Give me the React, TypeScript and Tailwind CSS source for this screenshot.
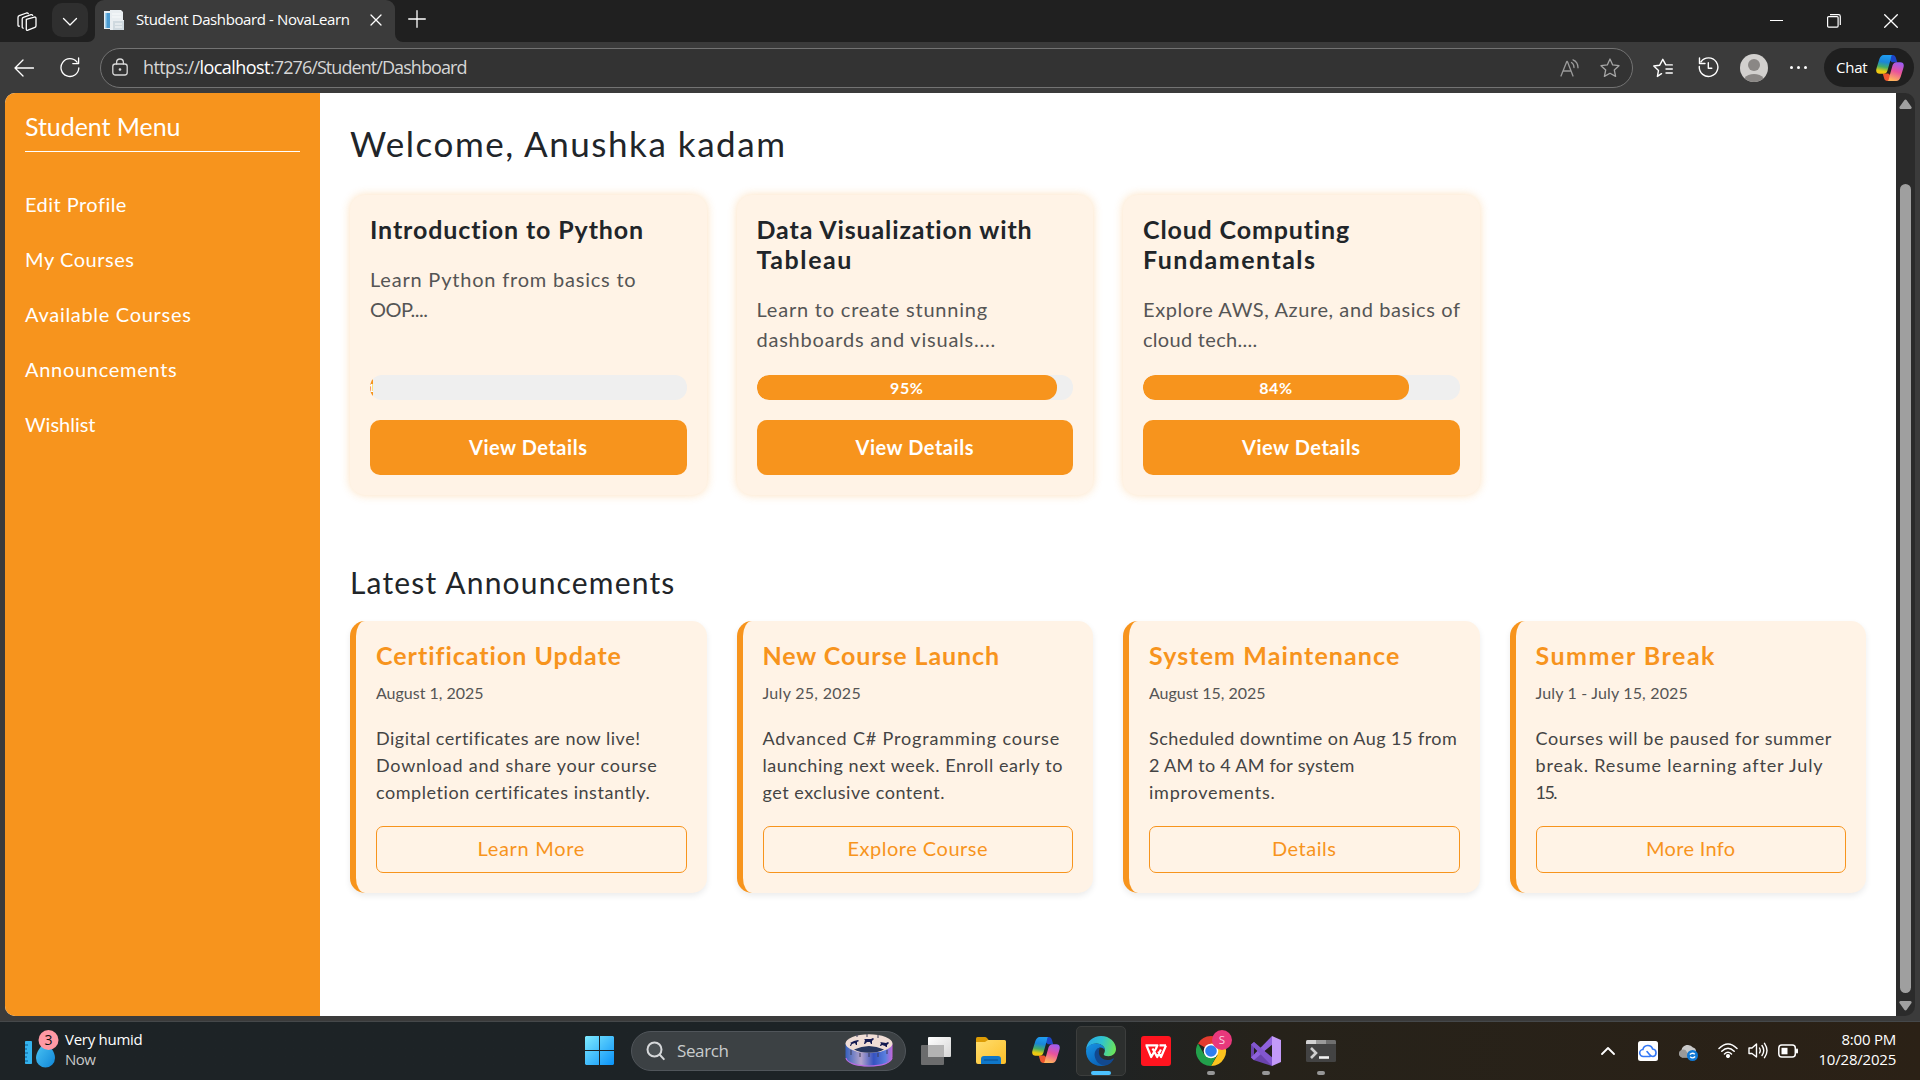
import React, { useLayoutEffect, useRef } from "react";

/* A single line of text whose letter spacing is adjusted to a given measure. */
function Line({ w, className = "", children }: { w: number; className?: string; children: string }) {
  const ref = useRef<HTMLSpanElement>(null);
  useLayoutEffect(() => {
    const el = ref.current;
    if (!el) return;
    el.style.letterSpacing = "0px";
    const natural = el.getBoundingClientRect().width;
    el.style.letterSpacing = `${(w + 1.5 - natural) / children.length}px`;
  }, [w, children]);
  return (
    <span className={`block ${className}`}>
      <span ref={ref} className="inline-block whitespace-nowrap">
        {children}
      </span>
    </span>
  );
}

type T = [string, number];

const menu: T[] = [
  ["Edit Profile", 100],
  ["My Courses", 108],
  ["Available Courses", 165],
  ["Announcements", 151],
  ["Wishlist", 69],
];

const courses: { title: T[]; desc: T[]; pct: number; label?: string }[] = [
  { title: [["Introduction to Python", 273]], desc: [["Learn Python from basics to", 265], ["OOP....", 56]], pct: 1 },
  {
    title: [["Data Visualization with", 275], ["Tableau", 95]],
    desc: [["Learn to create stunning", 230], ["dashboards and visuals....", 238]],
    pct: 95,
    label: "95%",
  },
  {
    title: [["Cloud Computing", 206], ["Fundamentals", 172]],
    desc: [["Explore AWS, Azure, and basics of", 316], ["cloud tech....", 113]],
    pct: 84,
    label: "84%",
  },
];

const news: { title: T; date: T; body: T[]; action: T }[] = [
  {
    title: ["Certification Update", 245],
    date: ["August 1, 2025", 106],
    body: [["Digital certificates are now live!", 263], ["Download and share your course", 280], ["completion certificates instantly.", 273]],
    action: ["Learn More", 106],
  },
  {
    title: ["New Course Launch", 236],
    date: ["July 25, 2025", 97],
    body: [["Advanced C# Programming course", 296], ["launching next week. Enroll early to", 299], ["get exclusive content.", 181]],
    action: ["Explore Course", 139],
  },
  {
    title: ["System Maintenance", 250],
    date: ["August 15, 2025", 115],
    body: [["Scheduled downtime on Aug 15 from", 307], ["2 AM to 4 AM for system", 204], ["improvements.", 125]],
    action: ["Details", 63],
  },
  {
    title: ["Summer Break", 179],
    date: ["July 1 - July 15, 2025", 151],
    body: [["Courses will be paused for summer", 295], ["break. Resume learning after July", 286], ["15.", 19]],
    action: ["More Info", 88],
  },
];

function Copilot({ id, className }: { id: string; className: string }) {
  return (
    <svg viewBox="0 0 28 26" className={className}>
      <defs>
        <linearGradient id={`${id}a`} x1="0.4" y1="0" x2="0.25" y2="1">
          <stop offset="0" stopColor="#1f9cf0" />
          <stop offset="0.35" stopColor="#1a86d8" />
          <stop offset="0.62" stopColor="#45ad66" />
          <stop offset="0.85" stopColor="#e8cc12" />
          <stop offset="1" stopColor="#f6c212" />
        </linearGradient>
        <linearGradient id={`${id}b`} x1="0.7" y1="0" x2="0.4" y2="1">
          <stop offset="0" stopColor="#9a5cf5" />
          <stop offset="0.5" stopColor="#e9529c" />
          <stop offset="1" stopColor="#ffb45c" />
        </linearGradient>
      </defs>
      <path d="M14 0h2.600c1.700 0 2.800 1.100 3.300 2.800l1.300 4.400h-5.400L13.500 5z" fill="#1b46c8" />
      <path d="M14 26h-2.600c-1.800 0-2.800-1.100-3.300-2.800L6.700 18.500h5.500l2.500 2z" fill="#ee5630" />
      <path d="M16.200 0H7.800C5.600 0 4.200 1.600 3.300 4.300L.7 12.800C-.7 17 .9 18.700 3.600 18.700h4c2 0 3.200-1.200 3.900-3.300l3.100-11c.5-2 .6-4 1.600-4.400z" fill={`url(#${id}a)`} />
      <path d="M11.800 26h8.400c2.200 0 3.600-1.600 4.500-4.300l2.600-8.500c1.300-4.200-.2-6-2.900-6h-4c-2 0-3.200 1.300-3.900 3.400l-3.100 11c-.5 2-.6 4-1.600 4.400z" fill={`url(#${id}b)`} />
    </svg>
  );
}

const thin = { fill: "none", stroke: "#fff", strokeWidth: 1.3, strokeLinecap: "round", strokeLinejoin: "round" } as const;

function TabStrip() {
  return (
    <div className="flex h-[42px] shrink-0 items-center bg-[#202020]">
      <svg viewBox="0 0 20 20" className="ml-[17px] mt-[2px] h-5 w-5" {...thin}>
        <path d="M9.300 7.300l8-2.200q1.700-.4 1.700 1.300v7.300q0 1.200-1.100 1.600l-7 2.900q-1.600.6-1.600-1.100V9q0-1.300 0-1.700z" />
        <path d="M6.200 16.200q-1 .1-1-1.200V7q0-1.300 1.200-1.700L14 2.600q1.200-.3 1.700.8" />
        <path d="M2.400 14.200q-1.400.3-1.400-1.200V5.400q0-1.300 1.200-1.700L9.500 1q1.300-.3 1.800.7" />
      </svg>
      <div className="-mt-0.5 ml-[15px] flex h-[34px] w-[36px] items-center justify-center rounded-[10px] bg-[#2f2f2f]">
        <svg viewBox="0 0 16 10" className="mt-1 h-[10px] w-4" {...thin}>
          <path d="M1.500 1.500L8 8l6.500-6.500" />
        </svg>
      </div>
      <div className="h-[42px] w-[7px] bg-[#3b3b3b]">
        <div className="h-full w-full rounded-br-[8px] bg-[#202020]" />
      </div>
      <div className="flex h-[42px] w-[300px] items-center rounded-t-[9px] bg-[#3b3b3b] pl-[9px]">
        <svg viewBox="0 0 20 20" className="-mt-0.5 h-5 w-5">
          <path d="M0 1h6V0h11l2 2v8h1v10H6v-1H0z" fill="#e9eef1" />
          <path d="M1 3h5v15H1z" fill="#4c9bd0" />
          <path d="M1 3h1.500v15H1z" fill="#9fd0ee" />
          <path d="M9 11h11v9H9z" fill="#cfd9df" />
          <path d="M8 4h9M8 7h9M11 14h7M11 17h7" stroke="#f8fafb" />
        </svg>
        <Line w={212} className="-mt-1 ml-3 font-['Open_Sans',sans-serif] text-[15px] leading-5 text-white">
          Student Dashboard - NovaLearn
        </Line>
        <svg viewBox="0 0 12 12" className="-mt-0.5 ml-5 h-3 w-3" {...thin}>
          <path d="M1 1l10 10M11 1L1 11" />
        </svg>
      </div>
      <div className="h-[42px] w-[8px] bg-[#3b3b3b]">
        <div className="h-full w-full rounded-bl-[8px] bg-[#202020]" />
      </div>
      <svg viewBox="0 0 18 18" className="-mt-1 ml-[5px] h-[18px] w-[18px]" {...thin}>
        <path d="M9 .7v16.600M.7 9h16.600" />
      </svg>
      <div className="ml-auto flex items-center pr-[22px] text-white">
        <div className="-mt-[2px] h-px w-[13px] bg-white" />
        <svg viewBox="0 0 14 14" className="ml-[44px] h-[14px] w-[14px]" fill="none" stroke="#fff" strokeWidth="1.200">
          <rect x=".6" y="2.600" width="10.500" height="10.500" rx="1" />
          <path d="M3 .7h8.500q1.800 0 1.800 1.800V11" />
        </svg>
        <svg viewBox="0 0 14 14" className="ml-[43px] h-[14px] w-[14px]" {...thin}>
          <path d="M.7.700l12.600 12.600M13.300.700L.7 13.300" />
        </svg>
      </div>
    </div>
  );
}

function Toolbar() {
  return (
    <div className="flex h-[51px] shrink-0 items-center bg-[#3b3b3b]">
      <svg viewBox="0 0 20 18" className="ml-[14px] h-[18px] w-5" {...thin}>
        <path d="M9 1L1 9l8 8M1 9h18.500" />
      </svg>
      <svg viewBox="0 0 20 21" className="ml-[26px] h-[21px] w-5" {...thin}>
        <path d="M18.800 11A8.900 8.900 0 1 1 17 5.200M18.600 1v5.600h-5.800" />
      </svg>
      <div className="ml-[20px] flex h-[40px] w-[1533px] items-center rounded-full border border-[#737373] bg-[#333333] pl-[11px]">
        <svg viewBox="0 0 16 18" className="-mt-0.5 h-[18px] w-4" {...thin} stroke="#d8d8d8">
          <rect x=".8" y="6" width="14.400" height="11" rx="2.500" />
          <path d="M4.600 6V4.400a3.400 3.400 0 0 1 6.800 0V6" />
          <circle cx="8" cy="11.500" r=".7" fill="#fff" />
        </svg>
        <div className="-mt-0.5 ml-[15px] flex font-['Open_Sans',sans-serif] text-[18px] leading-6 text-[#d6d6d6]">
          <Line w={55}>https://</Line>
          <Line w={69} className="text-white">localhost</Line>
          <Line w={195}>:7276/Student/Dashboard</Line>
        </div>
        <svg viewBox="0 0 20 18" className="ml-auto h-[18px] w-5" {...thin} stroke="#9b9b9b">
          <path d="M1 17L6.800 2.500h.6L13 17M3 12h8" />
          <path d="M11.500 3.500q2.500 1.500 2.500 5M13 .8q5 2 5 8" />
        </svg>
        <svg viewBox="0 0 20 20" className="ml-5 mr-[12px] h-5 w-5" {...thin} stroke="#a6a6a6">
          <path d="M10 1l2.700 5.900 6.300.8-4.700 4.300 1.300 6.400L10 15.300l-5.600 3.100L5.700 12 1 7.700l6.300-.8z" />
        </svg>
      </div>
      <svg viewBox="0 0 20 20" className="ml-[20px] h-5 w-5" {...thin} strokeWidth={1.4}>
        <path d="M8.500 15.700L4.400 18.400 5.500 12.400.8 8l5.900-.8L9.800 1.300l3 5.600h6.500M13 11h6.300M13 15h6.300" />
      </svg>
      <svg viewBox="0 0 21 21" className="ml-[25px] h-[21px] w-[21px]" {...thin} strokeWidth={1.4}>
        <path d="M3 4.800a9.300 9.300 0 1 1-1.700 4.700M1.500 1v5.500H7M10.300 5.800v5.500h3.500" />
      </svg>
      <svg viewBox="0 0 28 28" className="ml-[21px] h-7 w-7">
        <circle cx="14" cy="14" r="14" fill="#d2d0ce" />
        <circle cx="14" cy="11" r="6" fill="#8a8785" />
        <path d="M4.500 24.200a11 8.500 0 0 1 19 0A14 14 0 0 1 4.500 24.200z" fill="#8a8785" />
      </svg>
      <div className="-mt-px ml-[22px] flex gap-1">
        <div className="h-[3px] w-[3px] rounded-full bg-white" />
        <div className="h-[3px] w-[3px] rounded-full bg-white" />
        <div className="h-[3px] w-[3px] rounded-full bg-white" />
      </div>
      <div className="ml-[17px] flex h-[39px] w-[90px] items-center rounded-full bg-[#1f1f1f] pl-3">
        <Line w={30} className="font-['Open_Sans',sans-serif] text-[15px] text-white">Chat</Line>
        <Copilot id="tb" className="ml-2 h-[26px] w-7" />
      </div>
    </div>
  );
}

function Page() {
  return (
    <div className="flex h-[923px] w-[1891px] overflow-hidden rounded-l-[10px] bg-white font-[Lato,sans-serif]">
      <aside className="w-[315px] shrink-0 bg-[#f7941d] px-5 pt-[18px] text-white">
        <div className="h-[41px] border-b border-white">
          <Line w={154} className="text-[25px] leading-[30px]">Student Menu</Line>
        </div>
        <nav className="mt-[37px] flex flex-col gap-[25px]">
          {menu.map(([t, w]) => (
            <Line key={t} w={w} className="text-[20px] leading-[30px]">{t}</Line>
          ))}
        </nav>
      </aside>
      <main className="flex-1 px-[30px] pt-[29px] text-[#212529]">
        <h1>
          <Line w={435} className="text-[35px] leading-[42px]">Welcome, Anushka kadam</Line>
        </h1>
        <section className="mt-[31px] grid grid-cols-4 gap-[30px]">
          {courses.map((c) => (
            <article key={c.title[0][0]} className="flex h-[300px] flex-col rounded-[15px] bg-[#fff3e6] p-5 pt-[19px] shadow-[0_0_10px_rgba(247,148,29,0.3)]">
              <h2>
                {c.title.map(([t, w]) => (
                  <Line key={t} w={w} className="text-[25px] font-bold leading-[30px]">{t}</Line>
                ))}
              </h2>
              <div className="mt-5 text-[#555]">
                {c.desc.map(([t, w]) => (
                  <Line key={t} w={w} className="text-[20px] leading-[30px]">{t}</Line>
                ))}
              </div>
              <div className="mt-auto h-[25px] overflow-hidden rounded-[12px] bg-[#efefef]">
                <div
                  className={`flex h-full items-center justify-center overflow-hidden bg-[#f7941d] text-[16px] font-bold text-white ${c.label ? "rounded-[12px]" : ""}`}
                  style={{ width: `${c.pct}%` }}
                >
                  {c.label ? <Line w={32}>{c.label}</Line> : <span className="text-[12px]">1</span>}
                </div>
              </div>
              <div className="mt-5 flex h-[55px] items-center justify-center rounded-[10px] bg-[#f7941d] pb-0.5 text-[20px] font-bold text-white">
                <Line w={117}>View Details</Line>
              </div>
            </article>
          ))}
        </section>
        <h2 className="mt-[69px]">
          <Line w={324} className="text-[30px] leading-[36px]">Latest Announcements</Line>
        </h2>
        <section className="mt-[21px] grid grid-cols-4 gap-[30px]">
          {news.map((n) => (
            <article key={n.title[0]} className="h-[272px] rounded-[15px] border-l-[6px] border-[#f7941d] bg-[#fff3e6] p-5 pt-[19px] shadow-[0_3px_6px_rgba(0,0,0,0.08)]">
              <h3>
                <Line w={n.title[1]} className="text-[25px] font-bold leading-[30px] text-[#f7941d]">{n.title[0]}</Line>
              </h3>
              <Line w={n.date[1]} className="mt-[11px] text-[16px] leading-6 text-[#555]">{n.date[0]}</Line>
              <div className="mt-[20px] text-[#444]">
                {n.body.map(([t, w]) => (
                  <Line key={t} w={w} className="text-[18px] leading-[27px]">{t}</Line>
                ))}
              </div>
              <div className="mt-[20px] flex h-[47px] items-center justify-center rounded-[7px] border border-[#f7941d] pb-[3px] text-[20px] text-[#f7941d]">
                <Line w={n.action[1]}>{n.action[0]}</Line>
              </div>
            </article>
          ))}
        </section>
      </main>
    </div>
  );
}

function Scrollbar() {
  return (
    <div className="flex h-[923px] w-[19px] flex-col items-center rounded-r-[10px] bg-[#2b2b2b] pt-[6px]">
      <svg viewBox="0 0 13 10" className="h-[10px] w-[13px]">
        <path d="M6.500.500q.7 0 1.200.8L12.500 8q.7 1.700-1 2h-10Q0 9.700.5 8l4.800-6.700q.5-.8 1.200-.8z" fill="#9f9f9f" />
      </svg>
      <div className="mt-[75px] h-[809px] w-[11px] rounded-full bg-[#9f9f9f]" />
      <svg viewBox="0 0 13 10" className="mt-2 h-[10px] w-[13px] rotate-180">
        <path d="M6.500.500q.7 0 1.200.8L12.500 8q.7 1.700-1 2h-10Q0 9.700.5 8l4.800-6.700q.5-.8 1.200-.8z" fill="#9f9f9f" />
      </svg>
    </div>
  );
}

function Taskbar() {
  return (
    <div className="flex h-[59px] shrink-0 items-center border-t border-[#45484a] bg-linear-to-r from-[#1d2326] from-55% via-[#26221a] via-66% to-[#2b2116] pb-px font-['Open_Sans',sans-serif]">
      <svg viewBox="0 0 36 38" className="-mt-[3px] ml-6 h-[38px] w-9">
        <defs>
          <linearGradient id="drop" x1="0" y1="0" x2="1" y2="1">
            <stop offset="0" stopColor="#4fc8f5" />
            <stop offset="1" stopColor="#0f86d8" />
          </linearGradient>
        </defs>
        <rect x="1" y="11" width="7" height="23" rx=".8" fill="#34b3ee" />
        <path d="M1 15h3M1 19h2M1 23h3M1 27h2M1 31h3" stroke="#0b5d94" />
        <path d="M21.500 11c5 6 9.500 11 9.500 17a9.500 9.500 0 0 1-19 0c0-6 4.500-11 9.500-17z" fill="url(#drop)" />
        <circle cx="24.500" cy="10" r="10" fill="#ff99a4" />
        <text x="24.500" y="14.900" textAnchor="middle" fontSize="14" fill="#111">3</text>
      </svg>
      <div className="-mt-[4px] ml-[5px] w-[500px] text-[15px] leading-5">
        <Line w={76} className="text-white">Very humid</Line>
        <Line w={29} className="text-[#c8c8c8]">Now</Line>
      </div>
      <svg viewBox="0 0 29 29" className="ml-5 h-[29px] w-[29px]">
        <defs>
          <linearGradient id="win" x1="0" y1="0" x2="1" y2="1">
            <stop offset="0" stopColor="#7eeaff" />
            <stop offset="1" stopColor="#0a92f8" />
          </linearGradient>
        </defs>
        <path d="M1 0h13v14H0V1zM15 0h13l1 1v13H15zM0 15h14v14H1l-1-1zM15 15h14v13l-1 1H15z" fill="url(#win)" />
      </svg>
      <div className="ml-[17px] flex h-10 w-[275px] items-center rounded-full border border-[#50555a] bg-[#3c4144] pl-[14px]">
        <svg viewBox="0 0 19 20" className="h-5 w-[19px]" fill="none" stroke="#d6d8da" strokeWidth="2" strokeLinecap="round">
          <circle cx="8.500" cy="8.500" r="7" fill="#4b5154" />
          <path d="M13.800 13.800l4 4.300" />
        </svg>
        <Line w={50} className="ml-3 text-[17px] text-[#c9cccd]">Search</Line>
        <svg viewBox="0 0 48 33" className="ml-auto mr-3 h-[33px] w-12">
          <defs>
            <linearGradient id="zoe" x1="0" y1="0" x2="1" y2="0">
              <stop offset="0" stopColor="#3560bd" />
              <stop offset="0.330" stopColor="#b4a3cc" />
              <stop offset="0.600" stopColor="#3552c0" />
              <stop offset="0.850" stopColor="#5a80df" />
              <stop offset="1" stopColor="#c667dc" />
            </linearGradient>
          </defs>
          <path d="M.5 10h47v13c0 5-10 9.500-23.500 9.500S.5 28 .5 23z" fill="url(#zoe)" />
          <path d="M1 24c1 5 10 8 23 8s22-3 23-8" fill="none" stroke="#b96ae0" strokeWidth="1.200" />
          <ellipse cx="24" cy="9.500" rx="23.500" ry="9.200" fill="#f0ddd6" />
          <path d="M9 15.500q15-7 30 0-6 3.200-15 3.200T9 15.500z" fill="#27365f" />
          <path d="M5 9l4-2 4-1 1 1-2 1v3h-1l-1-2-3 1-1 2H5l1-3zM19 5l7 0 2-1 1 1-2 2v3h-1l-1-2h-3l-2 2h-1l1-4zM35 8l6 1 2-1 1 1-2 2v2h-1l-1-1-3-1-1 1h-1l1-3z" fill="#161b52" />
          <path d="M12 0v3M22 0v3M33 1v3M6 16v5M15 19v4M24 19v4M33 19v4M42 16v4" stroke="#3a3d58" />
        </svg>
      </div>
      <svg viewBox="0 0 30 28" className="ml-[15px] h-7 w-[30px]">
        <defs>
          <linearGradient id="tv" x1="0" y1="0" x2="1" y2="1">
            <stop offset="0" stopColor="#fff" />
            <stop offset="1" stopColor="#d5d5d5" />
          </linearGradient>
        </defs>
        <rect x="0" y="8" width="23" height="20" rx="1" fill="#6b6c6d" />
        <rect x="7" y="0" width="23" height="20" rx="1" fill="url(#tv)" />
        <path d="M7 8h16v12H7z" fill="#b3b3b3" />
      </svg>
      <svg viewBox="0 0 30 27" className="ml-[25px] h-[27px] w-[30px]">
        <defs>
          <linearGradient id="fold" x1="0" y1="0" x2="1" y2="1">
            <stop offset="0" stopColor="#ffdd6e" />
            <stop offset="1" stopColor="#fcbf28" />
          </linearGradient>
        </defs>
        <path d="M0 1.500Q0 0 1.500 0H9q1 0 2 1l2 2.500L9 6H0z" fill="#dd9c05" />
        <path d="M0 5h9l3-2h16.500q1.500 0 1.500 1.500v20.500q0 2-2 2H2q-2 0-2-2z" fill="url(#fold)" />
        <path d="M5 27v-5q0-3 3-3h14q3 0 3 3v5z" fill="#0f77c9" />
        <path d="M8.500 23h13" stroke="#0a4c8c" strokeWidth="1.200" strokeLinecap="round" />
      </svg>
      <Copilot id="tk" className="-mt-px ml-[26px] h-[26px] w-7" />
      <div className="ml-4 flex h-[50px] w-[50px] flex-col items-center rounded-[5px] border border-[#3c3e3d] bg-[#2c2f2e] pt-[9px]">
        <svg viewBox="0 0 30 30" className="h-[30px] w-[30px] shrink-0">
          <defs>
            <linearGradient id="eg1" x1="0" y1="0.300" x2="1" y2="0.500">
              <stop offset="0" stopColor="#2aa9e8" />
              <stop offset="0.500" stopColor="#2fc3d0" />
              <stop offset="1" stopColor="#6be45a" />
            </linearGradient>
            <linearGradient id="eg2" x1="0" y1="0" x2="0.600" y2="1">
              <stop offset="0" stopColor="#1794e4" />
              <stop offset="1" stopColor="#0a63b8" />
            </linearGradient>
          </defs>
          <path d="M0 14C.5 5.500 7 0 15 0c9 0 15 6.500 15 13 0 4.500-3.500 7.200-7.500 7.200-3 0-4.800-1-4.800-2 0-.8 1.200-1.500 1.200-4C18.900 10.500 15 7.500 10.500 7.500 5 7.500 1.500 11 0 14z" fill="url(#eg1)" />
          <path d="M0 15C.5 10 5 7.500 10.500 7.500c4.500 0 8.400 3 8.400 6.700-1-1.800-2.600-2.700-4.400-2.700-3.500 0-5 4-4 8.500s5 9 9.500 9c-1.500.7-3.200 1-5 1C6.500 30 0 23.500 0 15z" fill="url(#eg2)" />
          <path d="M14 11.600c-4 .8-5.800 4.500-5.300 8.400.6 5 5 9.500 10 9.500 4 0 7.500-3.500 9-6.500.3-.7-.2-.9-.8-.5-1.500 1-3.500 1.500-5.500 1.500-4.500 0-8-3-8.400-6.500-.3-2.500.3-4.500 1-5.900z" fill="#12498f" />
        </svg>
        <div className="mt-[5px] h-1 w-5 shrink-0 rounded-full bg-[#4cc2ff]" />
      </div>
      <svg viewBox="0 0 30 30" className="ml-[15px] h-[30px] w-[30px]">
        <rect width="30" height="30" rx="3" fill="#ff141f" />
        <path d="M4.500 9.300h12l-1.600 3.500M5.500 9.500l4.700 11.500 4.700-8.200M11.500 12.500l4.700 8.500 3.700-7.500M25 9.500l-5 11.500-2.700-5.500M18.500 9.300H25" fill="none" stroke="#fff" strokeWidth="2.200" strokeLinejoin="round" />
      </svg>
      <div className="ml-[25px] flex h-[50px] w-9 flex-col pt-[4px]">
        <svg viewBox="0 0 36 36" className="h-9 w-9 shrink-0">
          <path d="M15 21L2 13.500A15 15 0 0 1 28 13.500z" fill="#e33b2e" />
          <path d="M15 21V13.500h13A15 15 0 0 1 15 36l6.500-11z" fill="#fcc31e" />
          <path d="M15 21l6 4L15 36A15 15 0 0 1 2 13.500L8.500 25z" fill="#22a04b" />
          <circle cx="15" cy="21" r="7.300" fill="#fff" />
          <circle cx="15" cy="21" r="5.800" fill="#2f7ef0" />
          <circle cx="26" cy="10" r="10" fill="#e8387c" />
          <text x="26" y="14" textAnchor="middle" fontSize="11.500" fill="#fbd3e2">S</text>
        </svg>
        <div className="ml-[11px] mt-[5px] h-1 w-2 shrink-0 rounded-full bg-[#979797]" />
      </div>
      <div className="ml-[19px] flex h-[50px] w-[30px] flex-col items-center pt-[10px]">
        <svg viewBox="0 0 30 30" className="h-[30px] w-[30px] shrink-0">
          <path d="M0 8.500L3 6l18 18v6L2.500 24 0 21.500z" fill="#6a44ad" />
          <path d="M3 10.500v9l4.500-4.500z" fill="#25211d" />
          <path d="M0 21.500L21 0l1 8L3 24z" fill="#8f62dc" />
          <path d="M3 6l19 16-1 8L0 8.500z" fill="#8257cf" />
          <path d="M21 0l9 4v22l-9 4z" fill="#c39af8" />
          <path d="M21 9.500v11L14 15z" fill="#25211d" />
        </svg>
        <div className="mt-[5px] h-1 w-2 shrink-0 rounded-full bg-[#979797]" />
      </div>
      <div className="ml-[25px] flex h-[50px] w-[30px] flex-col items-center pt-[14px]">
        <svg viewBox="0 0 30 22" className="h-[22px] w-[30px] shrink-0">
          <rect width="30" height="22" rx="1.500" fill="#434343" />
          <path d="M0 4V1.500Q0 0 1.500 0H10v4z" fill="#d2d2d2" />
          <path d="M10 0h10v4H10z" fill="#9a9a9a" />
          <path d="M20 0h8.500Q30 0 30 1.500V4H20z" fill="#6f6f6f" />
          <path d="M5 8l5 5-5 5" fill="none" stroke="#cfcfcf" strokeWidth="2.600" />
          <path d="M13 17.500h10" stroke="#f2f2f2" strokeWidth="2.600" />
        </svg>
        <div className="mt-[9px] h-1 w-2 shrink-0 rounded-full bg-[#979797]" />
      </div>
      <div className="ml-auto flex items-center pr-6">
        <svg viewBox="0 0 14 9" className="h-[9px] w-[14px]" {...thin} strokeWidth={1.800}>
          <path d="M1 8l6-6 6 6" />
        </svg>
        <svg viewBox="0 0 20 20" className="ml-[23px] h-5 w-5">
          <rect width="20" height="20" rx="2.500" fill="#fff" />
          <path d="M12 15.500H5.500a3.500 3.500 0 0 1-.6-7 5 5 0 0 1 9.700-.5 3.800 3.800 0 0 1 .4 7.500q-2 0-3.500-2L9 10.500" fill="none" stroke="#3478f6" strokeWidth="1.600" strokeLinecap="round" />
        </svg>
        <svg viewBox="0 0 20 17" className="ml-5 mt-1 h-[17px] w-5">
          <path d="M4 13.500a4 4 0 0 1-.5-7.500A6.500 6.500 0 0 1 15 3.500q3 .5 3 4l-5 6z" fill="#c9c9c9" />
          <path d="M4 13.500a4 4 0 0 1-.5-7.500q2-1 4 0l5 7.500z" fill="#9a9a9a" />
          <circle cx="14.500" cy="11.500" r="5.500" fill="#0f78d4" />
          <path d="M11.800 10.500q2.700-2.500 5-.2M17.200 12.600q-2.700 2.500-5 .2" fill="none" stroke="#fff" strokeWidth="1.300" />
        </svg>
        <svg viewBox="0 0 20 15" className="-mt-px ml-5 h-[15px] w-5" {...thin} strokeWidth={1.500}>
          <path d="M1 5.500q9-9 18 0M3.800 8.300q6.200-6 12.400 0M6.500 11q3.500-3.400 7 0" />
          <circle cx="10" cy="13" r="1.300" fill="#fff" />
        </svg>
        <svg viewBox="0 0 20 17" className="ml-[10px] h-[17px] w-5" {...thin} strokeWidth={1.400}>
          <path d="M1 6h3l4.500-4v13L4 11.500H1zM11.500 6q1.500 2.500 0 5M14 3.500q3.500 5 0 10M16.500 1.300q5 7.200 0 14.400" />
        </svg>
        <svg viewBox="0 0 21 14" className="ml-[10px] h-[14px] w-[21px]" {...thin} strokeWidth={1.500}>
          <rect x=".8" y="1" width="16.500" height="12" rx="3" />
          <rect x="3.500" y="3.800" width="6" height="6.500" fill="#fff" stroke="none" />
          <path d="M19 5.500v3" strokeWidth="2" />
        </svg>
        <div className="-mt-[3px] ml-5 flex w-[77px] flex-col items-end text-[15px] leading-5 text-white">
          <Line w={53}>8:00 PM</Line>
          <Line w={76}>10/28/2025</Line>
        </div>
      </div>
    </div>
  );
}

export default function App() {
  return (
    <div className="flex h-[1080px] w-[1920px] flex-col overflow-hidden bg-[#3b3b3b]">
      <TabStrip />
      <Toolbar />
      <div className="flex h-[928px] pl-[5px]">
        <Page />
        <Scrollbar />
      </div>
      <Taskbar />
    </div>
  );
}
